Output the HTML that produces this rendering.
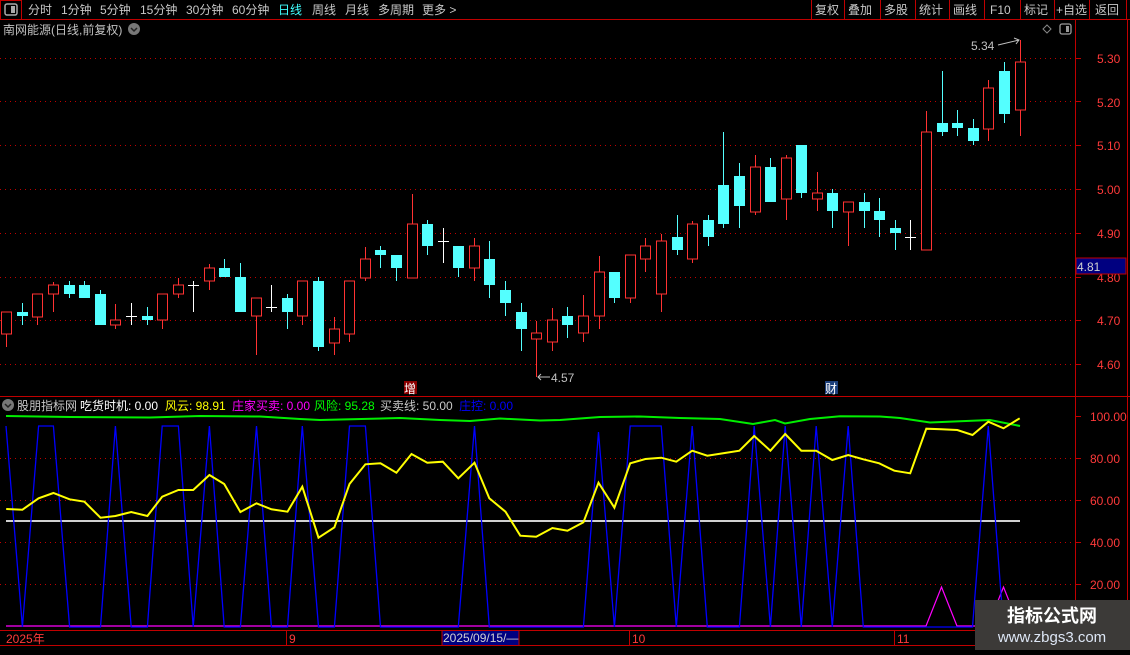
<!DOCTYPE html>
<html><head><meta charset="utf-8">
<style>
html,body{margin:0;padding:0;background:#000;}
body{width:1130px;height:650px;overflow:hidden;position:relative;font-family:"Liberation Sans","Noto Sans CJK SC",sans-serif;}
svg text{font-family:"Liberation Sans","Noto Sans CJK SC",sans-serif;}
</style></head><body>
<svg id="s" width="1130" height="650" viewBox="0 0 1130 650" xmlns="http://www.w3.org/2000/svg">
<rect width="1130" height="650" fill="#000"/>
<!-- toolbar -->
<line x1="0" y1="19.5" x2="1130" y2="19.5" stroke="#c00000"/>
<rect x="0.5" y="0.5" width="21" height="19" fill="none" stroke="#c00000"/>
<rect x="5" y="4" width="12" height="11" rx="2" fill="none" stroke="#aaa" stroke-width="1.5"/>
<rect x="11" y="6" width="4" height="7" fill="#aaa"/>
<g font-size="12" fill="#c8c8c8">
<text x="28" y="14">分时</text><text x="61" y="14">1分钟</text><text x="100" y="14">5分钟</text>
<text x="140" y="14">15分钟</text><text x="186" y="14">30分钟</text><text x="232" y="14">60分钟</text>
<text x="278" y="14" fill="#40ffff">日线</text><text x="312" y="14">周线</text><text x="345" y="14">月线</text>
<text x="378" y="14">多周期</text><text x="422" y="14">更多 &gt;</text>
<text x="815" y="14">复权</text><text x="848" y="14">叠加</text><text x="884" y="14">多股</text>
<text x="919" y="14">统计</text><text x="953" y="14">画线</text><text x="990" y="14">F10</text>
<text x="1024" y="14">标记</text><text x="1056" y="14">+自选</text><text x="1095" y="14">返回</text>
</g>
<g stroke="#c00000">
<line x1="811.5" y1="0" x2="811.5" y2="19"/><line x1="844.5" y1="0" x2="844.5" y2="19"/>
<line x1="880.5" y1="0" x2="880.5" y2="19"/><line x1="915.5" y1="0" x2="915.5" y2="19"/>
<line x1="949.5" y1="0" x2="949.5" y2="19"/><line x1="984.5" y1="0" x2="984.5" y2="19"/>
<line x1="1020.5" y1="0" x2="1020.5" y2="19"/><line x1="1054.5" y1="0" x2="1054.5" y2="19"/>
<line x1="1089.5" y1="0" x2="1089.5" y2="19"/><line x1="1126.5" y1="0" x2="1126.5" y2="19"/>
</g>
<!-- title -->
<text x="3" y="34" font-size="12" fill="#c0c0c0">南网能源(日线,前复权)</text>
<circle cx="134" cy="29" r="6" fill="#777"/><path d="M131 28l3 3 3-3" stroke="#222" stroke-width="1.5" fill="none"/>
<path d="M1047 25l4 4-4 4-4-4z" fill="none" stroke="#888"/>
<rect x="1060" y="24" width="11" height="10" rx="2" fill="none" stroke="#999" stroke-width="1.3"/><rect x="1066" y="26" width="3" height="6" fill="#999"/>
<!-- main grid -->
<g stroke="#c00000" stroke-dasharray="1,4">
<line x1="0" y1="58.5" x2="1075" y2="58.5"/><line x1="0" y1="101.5" x2="1075" y2="101.5"/>
<line x1="0" y1="145.5" x2="1075" y2="145.5"/><line x1="0" y1="189.5" x2="1075" y2="189.5"/>
<line x1="0" y1="233.5" x2="1075" y2="233.5"/><line x1="0" y1="277.5" x2="1075" y2="277.5"/>
<line x1="0" y1="320.5" x2="1075" y2="320.5"/><line x1="0" y1="364.5" x2="1075" y2="364.5"/>
</g>
<!-- right axis -->
<line x1="1075.5" y1="20" x2="1075.5" y2="630" stroke="#c00000"/>
<line x1="1127.5" y1="20" x2="1127.5" y2="650" stroke="#c00000"/>
<g font-size="12" fill="#ff3a3a">
<text x="1097" y="63">5.30</text><text x="1097" y="107">5.20</text><text x="1097" y="150">5.10</text>
<text x="1097" y="194">5.00</text><text x="1097" y="238">4.90</text><text x="1097" y="282">4.80</text>
<text x="1097" y="325">4.70</text><text x="1097" y="369">4.60</text>
</g>
<g stroke="#c00000">
<line x1="1075" y1="58.5" x2="1081" y2="58.5"/><line x1="1075" y1="101.5" x2="1081" y2="101.5"/>
<line x1="1075" y1="145.5" x2="1081" y2="145.5"/><line x1="1075" y1="189.5" x2="1081" y2="189.5"/>
<line x1="1075" y1="233.5" x2="1081" y2="233.5"/><line x1="1075" y1="277.5" x2="1081" y2="277.5"/>
<line x1="1075" y1="320.5" x2="1081" y2="320.5"/><line x1="1075" y1="364.5" x2="1081" y2="364.5"/>
</g>
<rect x="1076" y="258" width="50" height="16" fill="#000080" stroke="#c00000"/>
<text x="1077" y="271" font-size="12" fill="#d0d0d0">4.81</text>
<g id="candles"></g>
<!-- annotations -->
<text x="971" y="50" font-size="12" fill="#c0c0c0">5.34</text>
<path d="M998 45l21-5M1014 38l5 2-3 4" stroke="#c0c0c0" fill="none"/>
<path d="M538 377h12M541 374l-3 3 3 3" stroke="#c0c0c0" fill="none"/>
<text x="551" y="382" font-size="12" fill="#c0c0c0">4.57</text>
<rect x="404" y="381" width="13" height="13" fill="#8b0000"/><text x="404" y="393" font-size="12" fill="#fff">增</text>
<rect x="825" y="381" width="13" height="13" fill="#1c3f7a"/><text x="825" y="393" font-size="12" fill="#fff">财</text>
<!-- divider -->
<line x1="0" y1="396.5" x2="1130" y2="396.5" stroke="#c00000"/>
<!-- indicator legend -->
<circle cx="8" cy="405" r="6" fill="#777"/><path d="M5 404l3 3 3-3" stroke="#222" stroke-width="1.5" fill="none"/>
<g font-size="12">
<text x="17" y="410" fill="#c8c8c8">股朋指标网</text>
<text x="80" y="410" fill="#fff">吃货时机: 0.00</text>
<text x="165" y="410" fill="#ffff00">风云: 98.91</text>
<text x="232" y="410" fill="#ff00ff">庄家买卖: 0.00</text>
<text x="314" y="410" fill="#00ff00">风险: 95.28</text>
<text x="380" y="410" fill="#c8c8c8">买卖线: 50.00</text>
<text x="459" y="410" fill="#0000ff">庄控: 0.00</text>
</g>
<!-- indicator grid -->
<g stroke="#c00000" stroke-dasharray="1,4">
<line x1="0" y1="458.5" x2="1075" y2="458.5"/><line x1="0" y1="500.5" x2="1075" y2="500.5"/>
<line x1="0" y1="542.5" x2="1075" y2="542.5"/><line x1="0" y1="584.5" x2="1075" y2="584.5"/>
</g>
<g font-size="12" fill="#ff3a3a">
<text x="1090" y="421">100.00</text><text x="1090" y="463">80.00</text><text x="1090" y="505">60.00</text>
<text x="1090" y="547">40.00</text><text x="1090" y="589">20.00</text>
</g>
<g stroke="#c00000">
<line x1="1075" y1="416.5" x2="1081" y2="416.5"/><line x1="1075" y1="458.5" x2="1081" y2="458.5"/>
<line x1="1075" y1="500.5" x2="1081" y2="500.5"/><line x1="1075" y1="542.5" x2="1081" y2="542.5"/>
<line x1="1075" y1="584.5" x2="1081" y2="584.5"/>
</g>
<!-- white 50 line -->
<line x1="6" y1="521" x2="1020" y2="521" stroke="#d0d0d0" stroke-width="2"/>
<!-- magenta -->
<polyline fill="none" stroke="#ff00ff" stroke-width="1.2" points="6,626 926,626 941.5,587 957,626 988,626 1003.5,587 1019,626"/>
<!-- blue -->
<polyline fill="none" stroke="#0000ff" stroke-width="1.3" points="6,426 22.4,627 38.6,426 53.4,426 69.6,627 100.5,627 115.4,426 131.2,627 147.4,627 162.2,426 178.4,426 193.2,627 209.4,426 224.2,627 240.4,627 256.5,426 271.4,627 287.5,627 302.3,426 318.5,627 334.4,627 349.5,426 365.4,426 380.5,627 458.3,627 474.5,426 489.3,627 583.4,627 598.5,432 614.4,627 630.2,426 661.2,426 676.3,627 692.2,426 707.3,627 739.4,627 754.2,426 770.4,627 785.2,426 801.3,627 816.2,426 832.3,627 848.2,426 863.3,627 972.5,627 988.3,426 1003.5,627 1020,627"/>
<!-- green -->
<polyline fill="none" stroke="#00ee00" stroke-width="2" points="6,416 70,417 150,417.5 200,416 260,416.5 300,419 320,420 400,418 440,420 470,421 500,418.5 540,420.5 560,420 600,417 640,416.5 680,418 720,419 753,424 775,420 785,423.5 810,419 840,416.3 880,416.5 900,418 930,422.5 990,420 1020,426"/>
<!-- yellow -->
<polyline fill="none" stroke="#ffff00" stroke-width="2" points="6.2,509 22.4,509.7 38.6,498.3 53.4,493 69.6,499.3 84.4,501.7 100.5,517.7 115.4,516 131.2,512 147.4,516 162.2,496.7 178.4,490 193.2,490 209.4,475 224.2,484 240.4,512 256.5,503.3 271.4,509.3 287.5,511.7 302.3,486.7 318.5,537.7 334.4,527.3 349.5,484 365.4,464.3 380.5,463.3 396.4,472.7 411.5,454 427.3,462.7 442.8,461.7 458.3,478.3 474.5,462.7 489.3,498.3 505.5,511.7 520.3,535.7 536.2,536.7 552.4,528 567.5,530.7 583.4,522.3 598.5,482.7 614.4,507.7 630.2,463.3 645.4,459 661.2,457.7 676.3,461.7 692.2,450.7 707.3,455.7 723.2,453.3 739.4,450.7 754.2,436 770.4,450.7 785.2,434 801.3,450.7 816.2,450.7 832.3,460 848.2,455 863.3,459.3 879.2,463.3 894.3,470.7 910.2,473.3 926.3,428.7 941.5,429.3 957.3,430 972.5,435 988.3,421.7 1003.5,428.3 1019.7,418.3"/>
<!-- bottom axis -->
<line x1="0" y1="630.5" x2="1130" y2="630.5" stroke="#c00000"/>
<line x1="286.5" y1="630" x2="286.5" y2="645" stroke="#c00000"/>
<line x1="629.5" y1="630" x2="629.5" y2="645" stroke="#c00000"/>
<line x1="894.5" y1="630" x2="894.5" y2="645" stroke="#c00000"/>
<line x1="0" y1="645.5" x2="1130" y2="645.5" stroke="#c00000"/>
<g font-size="12" fill="#ff3a3a">
<text x="6" y="643">2025年</text><text x="289" y="643">9</text><text x="632" y="643">10</text><text x="897" y="643">11</text>
</g>
<rect x="442" y="630.5" width="77" height="15" fill="#000080" stroke="#c00000"/>
<text x="443" y="642" font-size="12" fill="#d0d0d0">2025/09/15/—</text>
<!-- watermark -->
<rect x="975" y="600" width="155" height="50" fill="#3c3a38"/>
<text x="1052" y="622" font-size="18" font-weight="bold" fill="#ffffff" text-anchor="middle">指标公式网</text>
<text x="1052" y="642" font-size="15" fill="#dde6f5" text-anchor="middle">www.zbgs3.com</text>
</svg>
<script>
var d="r312,334,312,347;c312,316,303,325;r294,317,294,325;r285,294,282,312;c285,294,281,298;c285,298,281,298;c294,325,290,325;r320,325,304,329;w316,316,303,325;c316,320,307,325;r294,320,294,329;r285,294,278,298;w285,285,281,312;r268,281,264,290;c268,277,259,277;c277,312,263,312;r298,316,298,355;w307,307,285,312;c298,312,294,329;r281,316,281,325;c281,347,277,351;r329,343,317,355;r281,334,281,342;r259,278,247,281;c250,255,246,268;c255,268,255,281;r224,278,194,278;c224,246,220,255;w241,241,228,263;c246,268,246,277;r246,268,238,281;c259,285,241,298;c290,303,281,316;c312,329,303,351;r333,339,321,377;r320,342,308,351;c316,325,307,338;r316,333,295,342;r272,316,256,329;c272,298,272,303;r255,298,255,303;r246,259,238,272;r241,294,234,312;c237,250,215,255;r224,259,221,263;c220,237,215,246;c185,224,132,228;c176,206,163,228;r167,212,155,215;c167,202,158,202;r158,199,155,220;c145,193,145,198;r193,199,172,211;c193,211,189,228;r202,212,202,246;c202,211,193,228;c211,220,198,237;c228,233,220,250;w237,237,220,250;r132,250,111,250;c123,132,71,136;c123,128,110,136;c128,141,119,145;r88,129,80,141;c71,114,62,123;r62,110,40,136".split(";");
var g=document.getElementById("candles"),h="";
d.forEach(function(s,i){var t=s[0],v=s.slice(1).split(",").map(Number),x=Math.round(6.2+i*15.59)+0.5,a=v[0],b=v[1],hi=v[2],lo=v[3];
if(t=="c"){h+='<line x1="'+x+'" y1="'+hi+'" x2="'+x+'" y2="'+lo+'" stroke="#54ffff"/><rect x="'+(x-5.5)+'" y="'+a+'" width="11" height="'+Math.max(b-a,1)+'" fill="#54ffff"/>';}
else if(t=="r"){h+='<line x1="'+x+'" y1="'+hi+'" x2="'+x+'" y2="'+a+'" stroke="#ff3232"/><line x1="'+x+'" y1="'+b+'" x2="'+x+'" y2="'+lo+'" stroke="#ff3232"/><rect x="'+(x-5)+'" y="'+a+'" width="10" height="'+Math.max(b-a,1)+'" fill="#000" stroke="#ff3232"/>';}
else{h+='<line x1="'+x+'" y1="'+hi+'" x2="'+x+'" y2="'+lo+'" stroke="#fff"/><line x1="'+(x-5.5)+'" y1="'+(a+0.5)+'" x2="'+(x+5.5)+'" y2="'+(a+0.5)+'" stroke="#fff"/>';}
});
g.innerHTML=h;
</script>
</body></html>
